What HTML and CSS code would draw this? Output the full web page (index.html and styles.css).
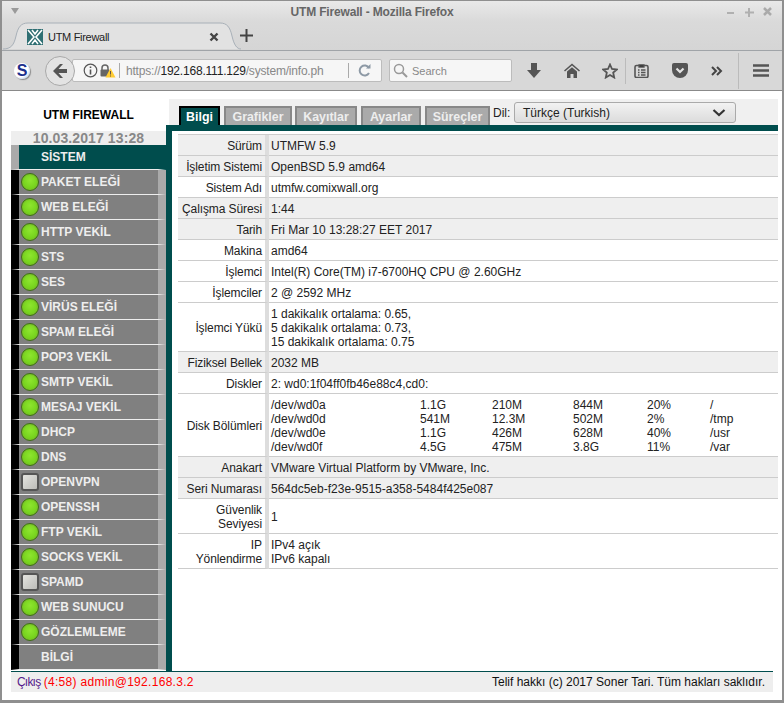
FILE: index.html
```html
<!DOCTYPE html>
<html>
	<head>
		<meta charset="utf-8">
		<title>UTM Firewall</title>
		<link rel="stylesheet" href="styles.css">
	</head>
	<body>
		<div class="window">
			<div class="titlebar">
				<span class="titlemenu"></span>
				<span class="titletext">UTM Firewall - Mozilla Firefox</span>
				<span class="winbtns">
					<svg width="46" height="12" viewBox="0 0 46 12"><path d="M0 7h7" stroke="#b0b0b0" stroke-width="2"/><path d="M22 2v9M18 6.500h9" stroke="#b0b0b0" stroke-width="2"/><path d="M37 2l7 7M44 2l-7 7" stroke="#aaa" stroke-width="2.500"/></svg>
				</span>
			</div>
			<div class="tabstrip">
				<div class="tab">
					<svg class="tabshape" width="238" height="30" viewBox="0 0 238 30"><path d="M0 28C8 28 11 24 13 15 15 6 18 2 25 2H217C224 2 227 6 229 15 231 24 234 28 238 28" fill="#e2e2e2" stroke="#a8b0b8"/></svg>
					<svg class="favicon" width="16" height="16" viewBox="0 0 16 16"><rect width="16" height="16" fill="#2f6f73"/><path d="M1 1l6 7-6 7M15 1l-6 7 6 7M5 1l3 4 3-4M5 15l3-4 3 4" fill="none" stroke="#fff" stroke-width="1.600"/></svg>
					<span class="tabtitle">UTM Firewall</span>
					<svg class="tabclose" width="10" height="10" viewBox="0 0 10 10"><path d="M1.500 1.500l7 7M8.500 1.500l-7 7" stroke="#444" stroke-width="2.400"/></svg>
				</div>
				<svg class="newtab" width="13" height="13" viewBox="0 0 13 13"><path d="M6.500 0v13M0 6.500h13" stroke="#444" stroke-width="2"/></svg>
			</div>
			<div class="navbar">
				<span class="sicon">S</span>
				<span class="backbtn">
					<svg width="16" height="14" viewBox="0 0 16 14"><path d="M8 0L1 7l7 7h3L6.500 9H15V5H6.500L11 0z" fill="#555"/></svg>
				</span>
				<div class="urlbar">
					<svg width="15" height="15" viewBox="0 0 15 15"><circle cx="7.500" cy="7.500" r="6.300" fill="none" stroke="#555" stroke-width="1.200"/><path d="M7.500 3.500v1.500M7.500 6.500v5" stroke="#555" stroke-width="1.600"/></svg>
					<svg class="lockicon" width="16" height="14" viewBox="0 0 16 14"><path d="M2 6V4a3 3 0 0 1 6 0v2" fill="none" stroke="#666" stroke-width="1.500"/><rect x="0.500" y="5.500" width="9" height="7" rx="1" fill="#666"/><path d="M10.500 4L15.500 13.500H5.500z" fill="#fc3"/><path d="M10.500 7v3.500M10.500 11.500v1" stroke="#654" stroke-width="1"/></svg>
					<span class="urlsep"></span>
					<span class="urltext">https://<b>192.168.111.129</b>/system/info.ph</span>
					<span class="urlsep2"></span>
					<svg class="reload" width="13" height="13" viewBox="0 0 13 13"><path d="M11 4A5 5 0 1 0 11 9" fill="none" stroke="#8d99a5" stroke-width="2"/><path d="M8 4.500h4.500V0z" fill="#8d99a5"/></svg>
				</div>
				<div class="searchbar">
					<svg width="15" height="15" viewBox="0 0 15 15"><circle cx="6" cy="6" r="4.500" fill="none" stroke="#999" stroke-width="1.500"/><path d="M9.500 9.500l4.500 4.500" stroke="#999" stroke-width="2"/></svg>
					<span>Search</span>
				</div>
				<span class="tbtn dl">
					<svg width="14" height="15" viewBox="0 0 14 15"><path d="M4 0h6v7h4l-7 8-7-8h4z" fill="#555"/></svg>
				</span>
				<span class="tbtn">
					<svg width="16" height="15" viewBox="0 0 16 15"><path d="M0 7.500L8 .5l8 7-1 1-7-6-7 6z" fill="#555"/><path d="M3 8.500L8 4.200l5 4.300V15H9.500v-4h-3v4H3z" fill="#555"/></svg>
				</span>
				<span class="tbtn gap8 sepright">
					<svg width="16" height="16" viewBox="0 0 16 16"><path d="M8 1.500l2 4.500 4.800.5-3.600 3.200 1 4.800L8 12l-4.200 2.500 1-4.800L1.200 6.500 6 6z" fill="none" stroke="#555" stroke-width="1.800"/></svg>
				</span>
				<span class="tbtn">
					<svg width="15" height="15" viewBox="0 0 15 15"><rect x="1" y="2.500" width="13" height="12" rx="1.500" fill="none" stroke="#555" stroke-width="1.600"/><path d="M5 2h5v2H5zM4 7h1.500M7 7h4.500M4 9.500h1.500M7 9.500h4.500M4 12h1.500M7 12h4.500" stroke="#555" stroke-width="1.300"/></svg>
				</span>
				<span class="tbtn gap9">
					<svg width="16" height="15" viewBox="0 0 16 15"><path d="M0 2a2 2 0 0 1 2-2h12a2 2 0 0 1 2 2v5a8 8 0 0 1-16 0z" fill="#555"/><path d="M4.500 5.500L8 9l3.500-3.500" fill="none" stroke="#e4e4e4" stroke-width="2.200"/></svg>
				</span>
				<span class="tbtn gap7">
					<svg width="12" height="10" viewBox="0 0 12 10"><path d="M1 1l4 4-4 4M6 1l4 4-4 4" fill="none" stroke="#444" stroke-width="2"/></svg>
				</span>
				<span class="tbtn gap13 sepleft">
					<svg width="16" height="13" viewBox="0 0 16 13"><path d="M0 1.500h16M0 6.500h16M0 11.500h16" stroke="#555" stroke-width="2.600"/></svg>
				</span>
			</div>
			<div class="page">
				<div class="columns">
					<div class="sidebar">
						<div class="brand">UTM FIREWALL</div>
						<div class="clock">10.03.2017 13:28</div>
						<div class="menu">
							<div class="item active"><span class="led none"></span>SİSTEM</div>
							<div class="item"><span class="led on"></span>PAKET ELEĞİ</div>
							<div class="item"><span class="led on"></span>WEB ELEĞİ</div>
							<div class="item"><span class="led on"></span>HTTP VEKİL</div>
							<div class="item"><span class="led on"></span>STS</div>
							<div class="item"><span class="led on"></span>SES</div>
							<div class="item"><span class="led on"></span>VİRÜS ELEĞİ</div>
							<div class="item"><span class="led on"></span>SPAM ELEĞİ</div>
							<div class="item"><span class="led on"></span>POP3 VEKİL</div>
							<div class="item"><span class="led on"></span>SMTP VEKİL</div>
							<div class="item"><span class="led on"></span>MESAJ VEKİL</div>
							<div class="item"><span class="led on"></span>DHCP</div>
							<div class="item"><span class="led on"></span>DNS</div>
							<div class="item"><span class="led off"></span>OPENVPN</div>
							<div class="item"><span class="led on"></span>OPENSSH</div>
							<div class="item"><span class="led on"></span>FTP VEKİL</div>
							<div class="item"><span class="led on"></span>SOCKS VEKİL</div>
							<div class="item"><span class="led off"></span>SPAMD</div>
							<div class="item"><span class="led on"></span>WEB SUNUCU</div>
							<div class="item"><span class="led on"></span>GÖZLEMLEME</div>
							<div class="item"><span class="led none"></span>BİLGİ</div>
						</div>
					</div>
					<div class="main">
						<div class="tabs">
							<a class="pagetab current">Bilgi</a>
							<a class="pagetab w-graf">Grafikler</a>
							<a class="pagetab w-kay">Kayıtlar</a>
							<a class="pagetab w-aya">Ayarlar</a>
							<a class="pagetab w-sur">Süreçler</a>
							<span class="dil">Dil:</span>
							<span class="langselect">Türkçe (Turkish)
								<svg width="14" height="8" viewBox="0 0 14 8"><path d="M1.500 1l5.500 5 5.500-5" fill="none" stroke="#333" stroke-width="2.200"/></svg>
							</span>
						</div>
						<div class="panel">
							<table class="info">
								<tr class="shade"><td class="key">Sürüm</td><td>UTMFW 5.9</td></tr>
								<tr class="shade"><td class="key">İşletim Sistemi</td><td>OpenBSD 5.9 amd64</td></tr>
								<tr><td class="key">Sistem Adı</td><td>utmfw.comixwall.org</td></tr>
								<tr class="shade"><td class="key">Çalışma Süresi</td><td>1:44</td></tr>
								<tr class="shade"><td class="key">Tarih</td><td>Fri Mar 10 13:28:27 EET 2017</td></tr>
								<tr><td class="key">Makina</td><td>amd64</td></tr>
								<tr><td class="key">İşlemci</td><td>Intel(R) Core(TM) i7-6700HQ CPU @ 2.60GHz</td></tr>
								<tr><td class="key">İşlemciler</td><td>2 @ 2592 MHz</td></tr>
								<tr><td class="key">İşlemci Yükü</td><td>1 dakikalık ortalama: 0.65,<br/>5 dakikalık ortalama: 0.73,<br/>15 dakikalık ortalama: 0.75</td></tr>
								<tr class="shade"><td class="key">Fiziksel Bellek</td><td>2032 MB</td></tr>
								<tr><td class="key">Diskler</td><td>2: wd0:1f04ff0fb46e88c4,cd0:</td></tr>
								<tr>
									<td class="key">Disk Bölümleri</td>
									<td>
										<div class="disks">
											<span>/dev/wd0a</span><span>1.1G</span><span>210M</span><span>844M</span><span>20%</span><span>/</span>
											<span>/dev/wd0d</span><span>541M</span><span>12.3M</span><span>502M</span><span>2%</span><span>/tmp</span>
											<span>/dev/wd0e</span><span>1.1G</span><span>426M</span><span>628M</span><span>40%</span><span>/usr</span>
											<span>/dev/wd0f</span><span>4.5G</span><span>475M</span><span>3.8G</span><span>11%</span><span>/var</span>
										</div>
									</td>
								</tr>
								<tr class="shade"><td class="key">Anakart</td><td>VMware Virtual Platform by VMware, Inc.</td></tr>
								<tr class="shade"><td class="key">Seri Numarası</td><td>564dc5eb-f23e-9515-a358-5484f425e087</td></tr>
								<tr><td class="key">Güvenlik<br/>Seviyesi</td><td>1</td></tr>
								<tr><td class="key">IP<br/>Yönlendirme</td><td>IPv4 açık<br/>IPv6 kapalı</td></tr>
							</table>
						</div>
					</div>
				</div>
				<div class="footer">
					<span><a class="logout">Çıkış</a> <span class="session">(4:58) admin@192.168.3.2</span></span>
					<span>Telif hakkı (c) 2017 Soner Tari. Tüm hakları saklıdır.</span>
				</div>
			</div>
		</div>
	</body>
</html>
```

FILE: styles.css
```css
html, body {
	margin: 0;
	padding: 0;
	background: #fff;
}
body {
	width: 784px;
	height: 703px;
	overflow: hidden;
	font-family: "Liberation Sans", Arial, sans-serif;
	font-size: 12px;
	color: #222;
}
.window {
	box-sizing: border-box;
	width: 784px;
	height: 703px;
	border: 2px solid #8f8f8f;
	border-top-width: 1px;
	border-bottom-width: 3px;
	display: flex;
	flex-direction: column;
	background: #fff;
}

/* firefox chrome */
.titlebar {
	height: 20px;
	box-sizing: border-box;
	padding-top: 2px;
	display: flex;
	align-items: center;
	justify-content: center;
	background: linear-gradient(#e9e9e9, #dadada);
	color: #666;
	font-weight: bold;
	font-size: 12px;
	letter-spacing: -0.17px;
	position: relative;
}
.titletext {
	margin-right: 40px;
}
.titlemenu {
	position: absolute;
	left: 9px;
	top: 7px;
	border-left: 4px solid transparent;
	border-right: 4px solid transparent;
	border-top: 6px solid #9a9a9a;
}
.winbtns {
	position: absolute;
	right: 9px;
	top: 5px;
}
.tabstrip {
	height: 29px;
	display: flex;
	align-items: flex-start;
	background: linear-gradient(#dadada, #d5d5d5);
	border-bottom: 1px solid #a0a4a8;
}
.tab {
	position: relative;
	width: 232px;
	height: 29px;
	margin-left: 1px;
	display: flex;
	align-items: center;
	padding-left: 24px;
	box-sizing: border-box;
	color: #222;
}
.tabshape {
	position: absolute;
	left: 0;
	top: 0;
}
.favicon, .tabtitle, .tabclose {
	position: relative;
}
.favicon {
	margin-top: 2px;
}
.tabtitle {
	margin-left: 5px;
	width: 161px;
	margin-top: 2px;
	font-size: 11px;
	letter-spacing: -0.3px;
}
.tabclose {
	margin-top: 2px;
}
.newtab {
	margin: 8px 0 0 5px;
}
.navbar {
	height: 40px;
	box-sizing: border-box;
	border-bottom: 1px solid #8a8a8a;
	background: #d8d8d8;
	display: flex;
	align-items: center;
}
.sicon {
	width: 16px;
	height: 16px;
	margin-left: 12px;
	border-radius: 50%;
	background: radial-gradient(circle at 40% 40%, #fff 55%, #7f9fd0);
	box-shadow: 1px 1px 1px #888;
	color: #1c2f8c;
	font-weight: bold;
	font-size: 16px;
	line-height: 16px;
	text-align: center;
}
.backbtn {
	position: relative;
	z-index: 2;
	box-sizing: border-box;
	width: 30px;
	height: 30px;
	margin-left: 15px;
	border-radius: 50%;
	border: 1px solid #a9a9a9;
	background: #e3e3e3;
	display: flex;
	align-items: center;
	justify-content: center;
}
.urlbar, .searchbar {
	box-sizing: border-box;
	height: 23px;
	background: #f6f6f6;
	border: 1px solid #bcbcbc;
	border-radius: 2px;
	display: flex;
	align-items: center;
}
.urlbar {
	width: 310px;
	margin-left: -3px;
	padding-left: 10px;
}
.lockicon {
	margin-left: 2px;
}
.urlsep, .urlsep2 {
	width: 1px;
	height: 15px;
	background: #aaa;
}
.urlsep {
	margin-left: 3px;
}
.urlsep2 {
	margin-left: auto;
}
.urltext {
	margin-left: 6px;
	color: #888;
	font-size: 12px;
	letter-spacing: -0.2px;
	white-space: nowrap;
}
.urltext b {
	font-weight: normal;
	color: #222;
}
.reload {
	margin: 0 10px 0 9px;
}
.searchbar {
	width: 123px;
	margin-left: 7px;
	padding-left: 3px;
	color: #888;
	font-size: 11px;
}
.searchbar span {
	margin-left: 4px;
}
.tbtn {
	width: 30px;
	height: 26px;
	display: flex;
	align-items: center;
	justify-content: center;
	box-sizing: border-box;
}
.dl {
	margin-left: 7px;
	width: 30px;
	margin-right: 8px;
}
.gap8 {
	margin-left: 8px;
}
.gap9 {
	margin-left: 9px;
}
.gap7 {
	margin-left: 7px;
}
.gap13 {
	margin-left: 6px;
	width: 37px;
	padding-left: 7px;
}
.sepright {
	border-right: 1px solid #bbb;
	width: 31px;
}
.sepleft {
	border-left: 1px solid #bbb;
	height: 36px;
}

/* page */
.page {
	flex: 1;
	display: flex;
	flex-direction: column;
	padding-left: 9px;
	min-height: 0;
}
.columns {
	flex: 1;
	display: flex;
	min-height: 0;
}
.sidebar {
	width: 155px;
	flex: none;
}
.brand {
	height: 40px;
	box-sizing: border-box;
	padding-top: 17px;
	text-align: center;
	font-weight: bold;
	font-size: 12px;
	line-height: 15px;
	color: #000;
}
.clock {
	height: 14px;
	background: #eee;
	color: #888;
	font-size: 14px;
	letter-spacing: 0.1px;
	font-weight: bold;
	line-height: 15px;
	text-align: center;
	overflow: hidden;
}
.item {
	box-sizing: border-box;
	height: 25px;
	border-bottom: 1px solid #eee;
	border-left: 8px solid #000;
	border-right: 8px solid #aaa;
	background: #808080;
	color: #eee;
	font-weight: bold;
	font-size: 12px;
	display: flex;
	align-items: center;
	padding-left: 2px;
	white-space: nowrap;
}
.item.active {
	background: #004d4d;
	border-left-color: #aaa;
	border-right-color: #004d4d;
}
.led {
	box-sizing: border-box;
	width: 18px;
	height: 18px;
	margin-right: 2px;
	flex: none;
}
.led.on {
	border-radius: 50%;
	border: 1px solid #3e6e14;
	box-shadow: inset 0 0 0 1px #7dc02c;
	background: radial-gradient(circle at 50% 40%, #8ee52e, #66c812);
}
.led.off {
	border-radius: 3px;
	border: 2px solid #555;
	background: linear-gradient(135deg, #e4e4e0, #bcbcb8);
}
.main {
	flex: 1;
	min-width: 0;
	margin-right: 4px;
	padding-top: 8px;
	display: flex;
	flex-direction: column;
}
.tabs {
	height: 26px;
	margin-left: 3px;
	box-sizing: border-box;
	border-bottom: 0;
	background: #f0f0f0;
	display: flex;
	align-items: flex-end;
	padding-left: 10px;
}
.pagetab {
	box-sizing: border-box;
	height: 19px;
	margin-right: 4px;
	border: 2px solid #888;
	border-bottom: 0;
	background: #aaa;
	color: #eee;
	font-weight: bold;
	font-size: 12.4px;
	line-height: 19px;
	text-align: center;
}
.pagetab.current {
	width: 41px;
	background: #004d4d;
	border-color: #000;
	color: #fff;
}
.w-graf {
	width: 68px;
}
.w-kay {
	width: 62px;
	margin-left: -1px;
}
.w-aya {
	width: 60px;
}
.w-sur {
	width: 65px;
}
.dil {
	align-self: center;
	margin-left: -1px;
	width: 21px;
	color: #222;
	margin-top: 1px;
}
.langselect {
	box-sizing: border-box;
	width: 222px;
	height: 21px;
	margin-bottom: 2px;
	padding: 0 9px 0 8px;
	border: 1px solid #aaa;
	border-radius: 3px;
	background: linear-gradient(#f2f2f2, #dcdcdc);
	display: flex;
	align-items: center;
	justify-content: space-between;
}
.panel {
	flex: 1;
	border-top: 6px solid #004d4d;
	border-left: 6px solid #004d4d;
	padding: 3px 0 0 6px;
}
.info {
	width: 600px;
	table-layout: fixed;
	border-collapse: separate;
	border-spacing: 0;
	border-top: 1px solid #ccc;
	line-height: 14px;
}
.info td {
	padding: 4px 3px 2px 2px;
	border-bottom: 1px solid #ccc;
	vertical-align: middle;
}
.info td.key {
	box-sizing: border-box;
	width: 91px;
	padding: 4px 3px 2px 0;
	text-align: right;
	letter-spacing: -0.1px;
	border-right: 4px solid #ddd;
}
.shade td {
	background: #efefef;
}
.disks {
	display: grid;
	grid-template-columns: 149px 72px 81px 74px 63px 60px;
}
.footer {
	box-sizing: border-box;
	width: 762px;
	height: 21px;
	margin-bottom: 8px;
	padding: 0 8px 0 6px;
	border-top: 1px solid #004d4d;
	background: #eee;
	display: flex;
	justify-content: space-between;
	align-items: center;
	font-size: 12px;
	color: #111;
}
.logout {
	color: #551a8b;
	letter-spacing: -0.8px;
}
.session {
	color: #f00;
	letter-spacing: 0.3px;
}
```
